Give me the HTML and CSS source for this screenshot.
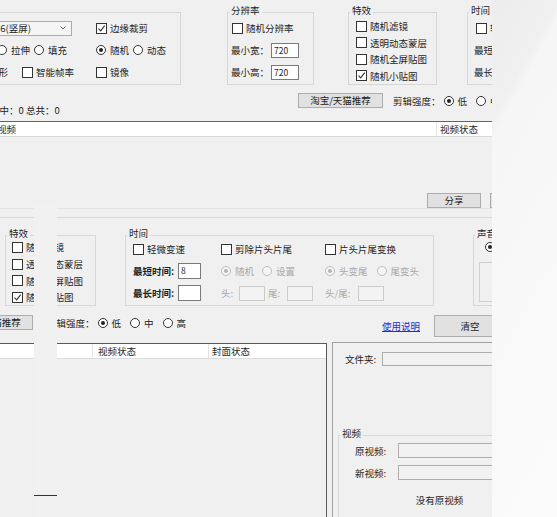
FILE: index.html
```html
<!DOCTYPE html>
<html lang="zh-CN">
<head>
<meta charset="UTF-8">
<meta name="viewport" content="width=device-width, initial-scale=1.0">
<title>视频批量剪辑</title>
<link rel="stylesheet" href="styles.css">
</head>
<body>
<div class="screen">
  <div class="app">

    <!-- 上面的窗口 -->
    <section class="win win-top">
      <div class="groups">
        <div class="grp grp-base">
          <div class="cols">
            <div class="rows r22 col-a">
              <div class="row">
                <div class="combo"><span>16(竖屏)</span><svg width="6" height="4" viewBox="0 0 6 4"><path d="M0.5 0.5L3 3L5.5 0.5" fill="none" stroke="#555" stroke-width="0.9"/></svg></div>
              </div>
              <div class="row">
                <label class="opt first-rb"><i class="rb"></i>拉伸</label>
                <label class="opt"><i class="rb"></i>填充</label>
              </div>
              <div class="row">
                <span>变形</span>
                <label class="opt push"><i class="cb"></i>智能帧率</label>
              </div>
            </div>
            <div class="rows r22">
              <div class="row"><label class="opt"><i class="cb"><svg viewBox="0 0 9 9"><path d="M1.5 4.6l2.2 2.3 4-5.2"/></svg></i>边缘裁剪</label></div>
              <div class="row">
                <label class="opt"><i class="rb on"></i>随机</label>
                <label class="opt"><i class="rb"></i>动态</label>
              </div>
              <div class="row"><label class="opt"><i class="cb"></i>镜像</label></div>
            </div>
          </div>
        </div>

        <div class="grp grp-res">
          <div class="cap">分辨率</div>
          <div class="rows r22">
            <div class="row"><label class="opt"><i class="cb"></i>随机分辨率</label></div>
            <div class="row"><span class="lbl">最小宽：</span><span class="field">720</span></div>
            <div class="row"><span class="lbl">最小高：</span><span class="field">720</span></div>
          </div>
        </div>

        <div class="grp grp-fx">
          <div class="cap">特效</div>
          <div class="rows r16">
            <div class="row"><label class="opt"><i class="cb"></i>随机滤镜</label></div>
            <div class="row"><label class="opt"><i class="cb"></i>透明动态蒙层</label></div>
            <div class="row"><label class="opt"><i class="cb"></i>随机全屏贴图</label></div>
            <div class="row"><label class="opt"><i class="cb"><svg viewBox="0 0 9 9"><path d="M1.5 4.6l2.2 2.3 4-5.2"/></svg></i>随机小贴图</label></div>
          </div>
        </div>

        <div class="grp grp-time">
          <div class="cap">时间</div>
          <div class="rows r22">
            <div class="row"><label class="opt"><i class="cb"></i>轻微变速</label></div>
            <div class="row"><span class="lbl">最短时间：</span></div>
            <div class="row"><span class="lbl">最长时间：</span></div>
          </div>
        </div>
      </div>

      <div class="toolbar">
        <span class="status">选中：0 总共：0</span>
        <span class="btn btn-tb">淘宝/天猫推荐</span>
        <div class="strength">
          <span class="st-lbl">剪辑强度：</span>
          <label class="opt"><i class="rb on"></i>低</label>
          <label class="opt"><i class="rb"></i>中</label>
          <label class="opt"><i class="rb"></i>高</label>
        </div>
      </div>

      <div class="list-head">
        <span class="lh-c1">视频</span>
        <span class="lh-c2">视频状态</span>
      </div>
      <div class="list-body"></div>

      <div class="foot">
        <span class="btn btn-share">分享</span>
        <span class="btn btn-next"></span>
      </div>
    </section>

    <!-- 下面的窗口 -->
    <section class="win win-bot">
      <div class="groups">
        <div class="grp grp-fx2">
          <div class="cap">特效</div>
          <div class="rows r17">
            <div class="row"><label class="opt"><i class="cb"></i>随机滤镜</label></div>
            <div class="row"><label class="opt"><i class="cb"></i>透明动态蒙层</label></div>
            <div class="row"><label class="opt"><i class="cb"></i>随机全屏贴图</label></div>
            <div class="row"><label class="opt"><i class="cb"><svg viewBox="0 0 9 9"><path d="M1.5 4.6l2.2 2.3 4-5.2"/></svg></i>随机小贴图</label></div>
          </div>
        </div>

        <div class="grp grp-time2">
          <div class="cap">时间</div>
          <div class="rows r22">
            <div class="row">
              <div class="t1"><label class="opt"><i class="cb"></i>轻微变速</label></div>
              <div class="t2"><label class="opt"><i class="cb"></i>剪除片头片尾</label></div>
              <div class="t3"><label class="opt"><i class="cb"></i>片头片尾变换</label></div>
            </div>
            <div class="row">
              <div class="t1"><span class="lbl-b">最短时间:</span><span class="field fs">8</span></div>
              <div class="t2 dis">
                <label class="opt"><i class="rb on"></i>随机</label>
                <label class="opt"><i class="rb"></i>设置</label>
              </div>
              <div class="t3 dis">
                <label class="opt"><i class="rb on"></i>头变尾</label>
                <label class="opt"><i class="rb"></i>尾变头</label>
              </div>
            </div>
            <div class="row">
              <div class="t1"><span class="lbl-b">最长时间:</span><span class="field fs"></span></div>
              <div class="t2 plain dis">
                <span class="w-head">头:</span><span class="field fd"></span>
                <span class="w-tail">尾:</span><span class="field fd"></span>
              </div>
              <div class="t3 plain dis">
                <span class="w-both">头/尾:</span><span class="field fd"></span>
              </div>
            </div>
          </div>
        </div>

        <div class="grp grp-snd">
          <div class="cap">声音</div>
          <div class="snd-rows">
            <div class="row snd-first"><i class="rb on"></i></div>
            <div class="snd-box"></div>
          </div>
        </div>
      </div>

      <div class="bar2">
        <span class="btn btn-tb">淘宝/天猫推荐</span>
        <div class="strength">
          <span class="st-lbl">剪辑强度：</span>
          <label class="opt"><i class="rb on"></i>低</label>
          <label class="opt"><i class="rb"></i>中</label>
          <label class="opt"><i class="rb"></i>高</label>
        </div>
        <a class="link">使用说明</a>
        <span class="btn btn-clear">清空</span>
      </div>

      <div class="lower">
        <div class="list2">
          <div class="l2-head">
            <span class="c1"></span>
            <span class="c2">视频状态</span>
            <span class="c3">封面状态</span>
          </div>
        </div>
        <div class="panel">
          <div class="folder">
            <span class="f-lbl">文件夹:</span>
            <span class="field wide"></span>
          </div>
          <div class="grp vgrp">
            <div class="cap">视频</div>
            <div class="vrows">
              <div class="vrow"><span class="v-lbl">原视频:</span><span class="field wide"></span></div>
              <div class="vrow"><span class="v-lbl">新视频:</span><span class="field wide"></span></div>
            </div>
            <div class="vnote">没有原视频</div>
          </div>
        </div>
      </div>
    </section>

    <div class="stripe"></div>
  </div>
  <div class="desk"></div>
</div>
</body>
</html>
```

FILE: styles.css
```css
* {
    box-sizing: border-box;
}

body {
    margin: 0;
    font-family: "Noto Sans CJK SC", "Noto Sans", sans-serif;
    font-size: 9.5px;
    line-height: 12px;
    color: #1e1e1e;
}

.screen {
    display: flex;
    width: 557px;
    height: 517px;
    overflow: hidden;
}

.app {
    position: relative;
    width: 492px;
    flex-shrink: 0;
    overflow: hidden;
    background: #f0f0f0;
}

.desk {
    flex: 1;
    background: linear-gradient(119deg, #ededed 0%, #f0f0f0 19%, #f6f6f6 22%, #fbfbfb 100%);
}

/* 分组框 */
.groups {
    display: flex;
    align-items: flex-start;
}

.win-top .groups {
    padding-top: 12px;
}

.grp {
    flex-shrink: 0;
    height: 73px;
    border: 1px solid #d7d7d7;
}

.cap {
    display: table;
    margin: -8px 0 0 1px;
    padding: 0 2px;
    line-height: 10px;
    background: #f0f0f0;
    white-space: nowrap;
}

.rows .row {
    display: flex;
    align-items: center;
    gap: 4px;
    white-space: nowrap;
}

.r22 .row { height: 22px; }
.r16 .row { height: 16.5px; }
.r17 .row { height: 16.7px; }

.grp-base {
    margin-left: -12px;
    width: 193px;
}

.cols {
    display: flex;
    padding-top: 4px;
}

.col-a {
    width: 107px;
    flex-shrink: 0;
}

.first-rb {
    margin-left: 8px;
}

.push {
    margin-left: 10px;
}

.grp-res {
    margin-left: 46px;
    width: 87px;
}

.grp-res .rows {
    padding: 2px 0 0 4px;
}

.grp-res .lbl {
    margin-left: -1px;
    margin-right: -2px;
}

.grp-fx {
    margin-left: 34px;
    width: 89px;
}

.grp-fx .rows {
    padding: 3px 0 0 7px;
}

.grp-time {
    margin-left: 30px;
    width: 90px;
}

.grp-time .rows {
    padding: 2px 0 0 8px;
}

.grp-time .lbl {
    margin-left: -2px;
}

/* 复选框 / 单选框 */
.opt {
    display: inline-flex;
    align-items: center;
    gap: 3px;
    white-space: nowrap;
}

.cb {
    display: inline-flex;
    align-items: center;
    justify-content: center;
    width: 11px;
    height: 11px;
    flex-shrink: 0;
    border: 1px solid #333;
    background: #fff;
}

.cb svg {
    width: 9px;
    height: 9px;
}

.cb path {
    fill: none;
    stroke: #333;
    stroke-width: 1.1;
}

.rb {
    display: inline-flex;
    align-items: center;
    justify-content: center;
    width: 10px;
    height: 10px;
    flex-shrink: 0;
    margin-right: 1px;
    border: 1px solid #333;
    border-radius: 50%;
    background: #fff;
}

.rb.on::after {
    content: "";
    width: 4px;
    height: 4px;
    border-radius: 50%;
    background: #222;
}

.dis {
    color: #a9a9a9;
}

.dis .rb {
    border-color: #bdbdbd;
    background: #f5f5f5;
}

.dis .rb.on::after {
    background: #b3b3b3;
}

/* 输入框、按钮 */
.combo {
    display: flex;
    align-items: center;
    justify-content: space-between;
    width: 80px;
    height: 15px;
    margin-left: 3px;
    padding: 0 5px 0 2px;
    border: 1px solid #acacac;
    background: #f5f5f5;
}

.field {
    display: inline-block;
    width: 28px;
    height: 15px;
    flex-shrink: 0;
    padding-left: 2px;
    border: 1px solid #7a7a7a;
    background: #fff;
    font-size: 8.5px;
    line-height: 13px;
}

.btn {
    display: inline-block;
    height: 15px;
    flex-shrink: 0;
    border: 1px solid #adadad;
    background: #e1e1e1;
    text-align: center;
    line-height: 13px;
    white-space: nowrap;
}

.btn-tb {
    width: 85px;
}

.strength {
    display: flex;
    align-items: center;
    gap: 9px;
    height: 15px;
    flex-shrink: 0;
    white-space: nowrap;
}

.st-lbl {
    margin-right: -6px;
}

/* 上窗口的工具栏和列表 */
.win-top {
    height: 218px;
    border-bottom: 1px solid #dadada;
}

.toolbar {
    display: flex;
    align-items: flex-start;
    height: 15px;
    margin-top: 8px;
}

.status {
    flex-shrink: 0;
    width: 308px;
    margin-left: -10px;
    padding-top: 11px;
    white-space: pre;
}

.toolbar .strength {
    margin-left: 10px;
}

.list-head {
    display: flex;
    height: 16px;
    margin-top: 13px;
    border-top: 1px solid #646464;
    border-bottom: 1px solid #d9d9d9;
    background: #fff;
    line-height: 14px;
    white-space: nowrap;
}

.lh-c1 {
    width: 437px;
    flex-shrink: 0;
    text-indent: -3px;
    border-right: 1px solid #e5e5e5;
}

.lh-c2 {
    padding-left: 3px;
}

.list-body {
    height: 56px;
}

.foot {
    display: flex;
    height: 16px;
    border-bottom: 1px solid #e3e3e3;
}

.btn-share {
    width: 54px;
    margin-left: 427px;
}

.btn-next {
    width: 50px;
    margin-left: 9px;
}

/* 下窗口 */
.win-bot {
    padding-top: 17px;
}

.grp-fx2 {
    margin-left: 5px;
    width: 91px;
    height: 71px;
}

.grp-fx2 .rows {
    padding: 1px 0 0 6px;
}

.grp-time2 {
    margin-left: 29px;
    width: 309px;
    height: 71px;
}

.grp-time2 .rows {
    padding-left: 7px;
}

.grp-time2 .row {
    gap: 0;
}

.t1, .t2, .t3 {
    display: flex;
    align-items: center;
    flex-shrink: 0;
    white-space: nowrap;
}

.t1 { width: 88px; }
.t2 { width: 104px; gap: 8px; }
.t3 { gap: 9px; }
.t2.plain, .t3.plain { gap: 0; }

.lbl-b {
    width: 45px;
    font-weight: bold;
}

.field.fs {
    width: 23px;
    height: 16px;
    font-size: 8.5px;
}

.field.fd {
    width: 26px;
    border-color: #cbcbcb;
    background: #f3f3f3;
}

.w-head { width: 18px; }
.w-tail { width: 19px; margin-left: 3px; }
.w-both { width: 33px; }

.grp-snd {
    margin-left: 39px;
    width: 80px;
    height: 71px;
}

.snd-rows {
    padding: 1px 0 0 5px;
}

.snd-first {
    display: flex;
    align-items: center;
    height: 16.7px;
    padding-left: 6px;
}

.snd-box {
    width: 70px;
    height: 40px;
    margin-top: 6px;
    border: 1px solid #cfcfcf;
}

.bar2 {
    display: flex;
    align-items: flex-start;
    height: 22px;
    margin-top: 9px;
}

.bar2 .btn-tb {
    margin-left: -52px;
}

.bar2 .strength {
    margin-left: 14px;
}

.link {
    margin-left: auto;
    margin-top: 5px;
    color: #2b2bcc;
    text-decoration: underline;
    white-space: nowrap;
}

.btn-clear {
    width: 72px;
    height: 22px;
    margin-left: 14px;
    margin-right: -14px;
    line-height: 20px;
}

.lower {
    display: flex;
    height: 174px;
    margin-top: 6px;
}

.list2 {
    width: 327px;
    flex-shrink: 0;
    border-top: 1px solid #5a5a5a;
    border-right: 1px solid #5a5a5a;
}

.l2-head {
    display: flex;
    height: 15px;
    border-bottom: 1px solid #dcdcdc;
    background: #fff;
    line-height: 14px;
    white-space: nowrap;
}

.l2-head .c1 {
    width: 93px;
    border-right: 1px solid #e3e3e3;
}

.l2-head .c2 {
    width: 116px;
    padding-left: 5px;
    border-right: 1px solid #e3e3e3;
}

.l2-head .c3 {
    padding-left: 3px;
}

.panel {
    width: 213px;
    flex-shrink: 0;
    margin: -1px 0 0 5px;
    padding: 9px 0 0 12px;
    border-left: 1px solid #a3a3a3;
    border-top: 1px solid #a3a3a3;
}

.folder {
    display: flex;
    align-items: center;
    height: 14px;
    white-space: nowrap;
}

.f-lbl {
    width: 37px;
    flex-shrink: 0;
}

.field.wide {
    flex: 1;
    border-color: #adadad;
    background: #f2f2f2;
}

.folder .field.wide {
    height: 14px;
}

.vgrp {
    width: 202px;
    height: 100px;
    margin: 69px 0 0 -7px;
    border-bottom: none;
    border-right: none;
}

.vrows {
    padding-left: 16px;
}

.vrow {
    display: flex;
    align-items: center;
    height: 15px;
    margin-top: 5px;
    white-space: nowrap;
}

.vrow + .vrow {
    margin-top: 7px;
}

.v-lbl {
    width: 43px;
    flex-shrink: 0;
}

.vnote {
    margin-top: 14px;
    text-align: center;
}

/* 两张截图叠在一起时中间那条空白 */
.stripe {
    position: absolute;
    left: 34px;
    top: 205px;
    width: 23px;
    height: 312px;
    background: #f1f1f1;
}

.stripe::after {
    content: "";
    position: absolute;
    left: 0;
    top: 290px;
    width: 23px;
    height: 1px;
    background: #333;
}
```
